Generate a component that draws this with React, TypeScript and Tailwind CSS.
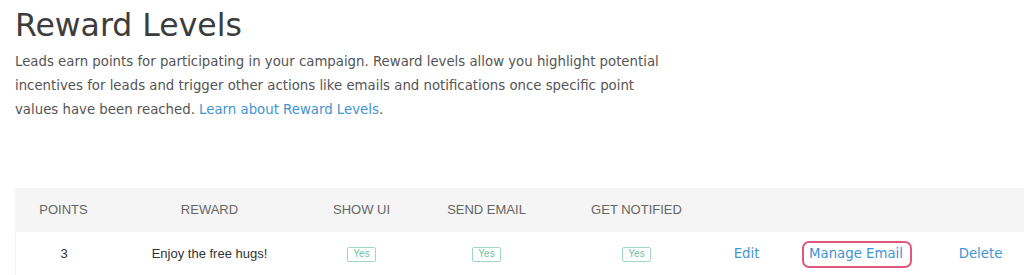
export default function App() {
  const badge = (
    <span className="inline-flex h-[15px] w-[29px] items-center justify-center rounded-[2px] border border-[#9ed8c0] text-[10px] leading-none text-[#6cbf9e]">
      Yes
    </span>
  )

  return (
    <div className="h-[275px] w-[1024px] overflow-hidden bg-white">
      <div className="pl-[15px] pt-[7px] font-['DejaVu_Sans',sans-serif]">
        <h1 className="text-[31.5px] leading-[36px] font-normal text-[#3c3c3c]">Reward Levels</h1>
        <p className="mt-[7px] w-[650px] text-[13.3px] leading-[24px] text-[#555]">
          Leads earn points for participating in your campaign. Reward levels allow you highlight potential
          incentives for leads and trigger other actions like emails and notifications once specific point
          values have been reached. <a className="text-[#3f94d3]">Learn about Reward Levels</a>.
        </p>
      </div>

      <div className="ml-[15px] mt-[66px] font-['Liberation_Sans',Arial,sans-serif] text-[13px]">
        {/* header */}
        <div className="flex h-[44px] items-center bg-[#f5f5f5] uppercase text-[#666]">
          <div className="w-[97px] text-center">Points</div>
          <div className="w-[195px] text-center">Reward</div>
          <div className="w-[109px] text-center">Show UI</div>
          <div className="w-[141px] text-center">Send Email</div>
          <div className="w-[159px] text-center">Get Notified</div>
          <div className="flex-1" />
        </div>

        {/* row */}
        <div className="flex h-[44px] items-center border-l border-[#f2f2f2] text-[#333]">
          <div className="w-[96px] text-center">3</div>
          <div className="w-[195px] text-center">Enjoy the free hugs!</div>
          <div className="flex w-[109px] justify-center">{badge}</div>
          <div className="flex w-[141px] justify-center">{badge}</div>
          <div className="flex w-[159px] justify-center">{badge}</div>
          <div className="w-[61px] text-center font-['DejaVu_Sans',sans-serif] text-[13.3px] text-[#3f94d3]">Edit</div>
          <div className="flex w-[160px] justify-center font-['DejaVu_Sans',sans-serif] text-[13.3px] text-[#3f94d3]">
            <span className="inline-flex h-[27px] items-center rounded-[7px] border-2 border-[#e2577c] pl-[5px] pr-[7px]">
              Manage Email
            </span>
          </div>
          <div className="w-[87px] text-center font-['DejaVu_Sans',sans-serif] text-[13.3px] text-[#3f94d3]">Delete</div>
        </div>
      </div>
    </div>
  )
}
